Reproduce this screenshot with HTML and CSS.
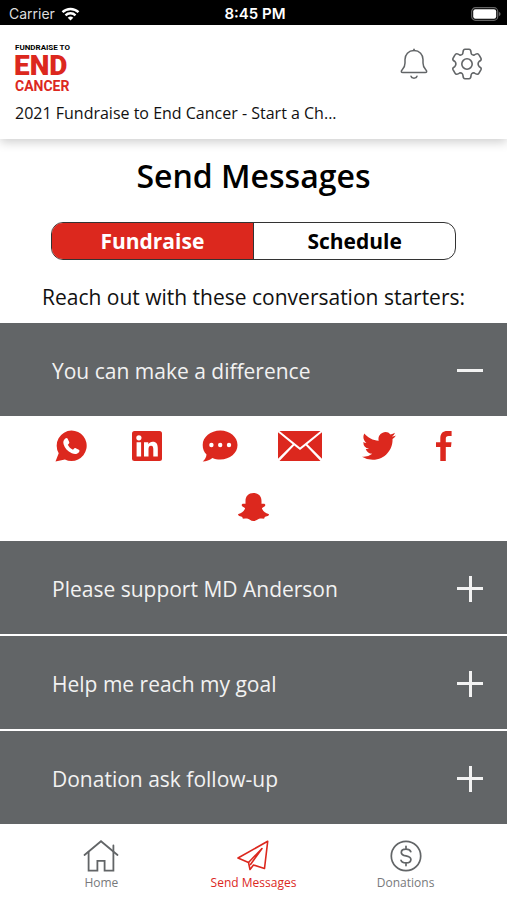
FILE: index.html
```html
<!DOCTYPE html>
<html lang="en">
	<head>
		<meta charset="utf-8" />
		<meta name="viewport" content="width=device-width, initial-scale=1" />
		<title>Send Messages</title>
		<link rel="stylesheet" href="styles.css">
	</head>
	<body>
		<div class="status">
			<div class="status-left">
				<span class="carrier">Carrier</span>
				<svg class="wifi" viewBox="0 0 18 14" fill="none" stroke="#fff" stroke-width="2.4">
					<path d="M1 5.2a11.5 11.5 0 0 1 16 0" />
					<path d="M4 8.3a7.2 7.2 0 0 1 10 0" />
					<path d="M9 13.6L6.2 10.8a4 4 0 0 1 5.6 0z" fill="#fff" stroke="none" />
				</svg>
			</div>
			<span class="time">8:45 PM</span>
			<div class="status-right">
				<svg class="battery" viewBox="0 0 30 14">
					<rect x="0.7" y="0.7" width="26" height="12.6" rx="3.8" fill="none" stroke="#666" stroke-width="1.2" />
					<rect x="2.2" y="2.2" width="23" height="9.6" rx="2.2" fill="#fff" />
					<path d="M27.9 4.8q1.7.7 1.7 2.2t-1.7 2.2z" fill="#666" />
				</svg>
			</div>
		</div>

		<header class="header">
			<div class="header-top">
				<svg class="logo" viewBox="0 0 53 52" role="img" aria-label="Fundraise to End Cancer">
					<text class="logo-small" x="0" y="7">FUNDRAISE TO</text>
					<text class="logo-big" x="-1" y="32">END</text>
					<text class="logo-mid" x="0" y="48">CANCER</text>
				</svg>
				<div class="actions">
					<button type="button" aria-label="Notifications">
						<svg class="bell" viewBox="0 0 28 32" fill="none" stroke="#626567" stroke-width="1.5" stroke-linecap="round" stroke-linejoin="round">
							<path d="M14 1.200V2.600" />
							<path d="M14 2.600C8.400 2.600 5 6.600 5 11.600V15c0 3.200-1 4.800-2.600 6.600C.6 23.600 1.200 24.600 2.800 24.600H25.200C26.800 24.600 27.400 23.600 25.600 21.600 24 19.800 23 18.200 23 15V11.600C23 6.600 19.600 2.600 14 2.600z" />
							<path d="M11 28.200C11.600 30.800 16.400 30.800 17 28.200" />
						</svg>
					</button>
					<button type="button" aria-label="Settings">
						<svg class="gear" viewBox="0 0 32 32" fill="none" stroke="#626567" stroke-width="1.6" stroke-linejoin="round">
							<circle cx="16" cy="16" r="5.2" />
							<path d="M12 4.200Q12.200 1.200 14 1.200H18Q19.800 1.200 20 4.200 20.200 7.400 23.100 7.100 26.800 4.500 28 6.800L30 10.400Q30.800 12.200 28.300 13.300 25.900 16 28.300 18.700 30.800 19.800 30 21.600L28 25.200Q26.800 27.500 23.100 24.900 20.200 24.600 20 27.800 19.800 30.800 18 30.800H14Q12.200 30.800 12 27.800 11.800 24.600 8.900 24.900 5.200 27.500 4 25.200L2 21.600Q1.200 19.800 3.700 18.700 6.100 16 3.700 13.300 1.200 12.200 2 10.400L4 6.800Q5.200 4.500 8.900 7.100 11.800 7.400 12 4.200z" />
						</svg>
					</button>
				</div>
			</div>
			<p class="event">2021 Fundraise to End Cancer - Start a Ch...</p>
		</header>

		<main class="main">
			<h1>Send Messages</h1>
			<div class="tabs">
				<button type="button" class="tab active">Fundraise</button>
				<button type="button" class="tab">Schedule</button>
			</div>
			<p class="intro">Reach out with these conversation starters:</p>

			<button type="button" class="row open" aria-expanded="true">
				<span>You can make a difference</span>
				<i class="sign minus"></i>
			</button>
			<div class="share">
				<a href="#" aria-label="WhatsApp">
					<svg width="32" height="32" viewBox="0 0 32 32">
						<path fill="#dc281e" d="M16.500.5a15.200 15.200 0 1 1-6.600 28.900L.5 31.500l3.200-8.200A15.200 15.200 0 0 1 16.500.5z" />
						<path fill="#fff" d="M10.300 8.600c1-.9 2-.7 2.500.3l1.400 3c.4.9-.1 1.600-1.400 2.800 1.200 2.300 2.700 3.800 5.200 5 1.200-1.400 1.900-2 2.800-1.500l3 1.500c.9.500.9 1.500.1 2.500-1.500 1.900-4 2.300-7.100 1C12.500 21.400 9.700 18 8.600 14.300c-.7-2.500-.1-4.300 1.700-5.700z" />
					</svg>
				</a>
				<a href="#" aria-label="LinkedIn">
					<svg width="35" height="30" viewBox="-5 0 35 30">
						<rect width="30" height="30" rx="2.5" fill="#dc281e" />
						<g fill="#fff">
							<circle cx="6.900" cy="6.800" r="2.600" />
							<path d="M4.600 11.200h4.500v14.200H4.600zM12 11.200h4.300v2c.9-1.500 2.400-2.400 4.300-2.400 4 0 5.200 2.600 5.200 6.700v7.900h-4.500v-7c0-2-.3-3.700-2.300-3.700s-2.500 1.600-2.500 3.600v7.100H12z" />
						</g>
					</svg>
				</a>
				<a href="#" aria-label="Text message">
					<svg width="36" height="32" viewBox="0 0 36 32">
						<path fill="#dc281e" d="M18.300.5C28 .5 35.500 7 35.500 15S28 29.500 18.300 29.500c-2.900 0-5.500-.5-7.900-1.600-2.800 2.200-6 3.500-9.700 3.600 2.300-2 3.600-4.300 3.800-7C1.900 22 .7 18.800.7 15 .7 7 8.500.5 18.300.5z" />
						<g fill="#fff">
							<circle cx="9.400" cy="15" r="2.200" />
							<circle cx="18.200" cy="15" r="2.200" />
							<circle cx="27" cy="15" r="2.200" />
						</g>
					</svg>
				</a>
				<a href="#" aria-label="Email">
					<svg width="44" height="30" viewBox="0 0 44 30">
						<path fill="#dc281e" d="M1.500 0h41L22 16.400zM0 1.300L14.600 13.200 0 27.800zM44 1.300v26.500L29.400 13.200zM16.200 14.500L22 19l5.800-4.500L42.500 30h-41z" />
					</svg>
				</a>
				<a href="#" aria-label="Twitter">
					<svg width="34" height="30" viewBox="0 2 24 20">
						<path fill="#dc281e" d="M23.950 4.570a10 10 0 0 1-2.820.770 4.960 4.960 0 0 0 2.160-2.720c-.950.550-2 .950-3.130 1.180a4.920 4.920 0 0 0-8.380 4.480C7.690 8.090 4.070 6.130 1.640 3.160a4.820 4.820 0 0 0-.670 2.480c0 1.710.870 3.210 2.190 4.100a4.900 4.900 0 0 1-2.230-.620v.060a4.920 4.920 0 0 0 3.950 4.830 5 5 0 0 1-2.210.080 4.940 4.940 0 0 0 4.600 3.420A9.870 9.870 0 0 1 0 19.540a13.990 13.990 0 0 0 7.560 2.210c9.050 0 14-7.500 14-13.980 0-.210 0-.420-.020-.630a9.940 9.940 0 0 0 2.410-2.570z" />
					</svg>
				</a>
				<a href="#" aria-label="Facebook">
					<svg width="16" height="30" viewBox="0 0 16 30">
						<path fill="#dc281e" d="M4.300 30V16H0v-4.800h4.300V7.400C4.300 2.500 6.700 0 11.500 0H15.600v4.900h-2.900c-2.200 0-2.900.9-2.900 2.700v3.600h5.700L15 16H9.800v14z" />
					</svg>
				</a>
				<a href="#" aria-label="Snapchat">
					<svg width="31" height="28" viewBox="0 0 31 28">
						<path fill="#dc281e" d="M15.500 0c4.900 0 8 3.200 8 8v2.700c1.300.1 2.800-.3 3.600.7.800 1.100-.6 2.500-2.600 3.300-.7.300-.6.900-.2 1.600 1.300 2.500 3.400 4 6.200 4.700.9.300.5 1.500-.8 2.100-1.100.5-2.500.7-2.900 1-.4.400-.2 1.300-.7 1.500-.9.300-2.600-.3-4.200-.1-2.100.3-3.400 2.500-6.400 2.500s-4.300-2.200-6.400-2.500c-1.600-.2-3.300.4-4.200.1-.5-.2-.3-1.100-.7-1.500-.4-.3-1.800-.5-2.900-1-1.300-.6-1.700-1.800-.8-2.100 2.800-.7 4.900-2.200 6.200-4.700.4-.7.5-1.300-.2-1.600-2-.8-3.400-2.200-2.600-3.300.8-1 2.300-.6 3.600-.7V8c0-4.800 3.100-8 8-8z" />
					</svg>
				</a>
			</div>

			<div class="rows">
				<button type="button" class="row" aria-expanded="false">
					<span>Please support MD Anderson</span>
					<i class="sign"></i>
				</button>
				<button type="button" class="row" aria-expanded="false">
					<span>Help me reach my goal</span>
					<i class="sign"></i>
				</button>
				<button type="button" class="row" aria-expanded="false">
					<span>Donation ask follow-up</span>
					<i class="sign"></i>
				</button>
			</div>
		</main>

		<nav class="nav">
			<a href="#">
				<svg width="36" height="32" viewBox="0 0 36 32" fill="none" stroke="#626567" stroke-width="1.8" stroke-linecap="round">
					<path d="M1.500 15L18 1.200 34.500 15" />
					<path d="M5.600 12v18.600h8.800V20.800h7.200v9.800h8.800V12M30.400 11V5.400" />
				</svg>
				<span>Home</span>
			</a>
			<a href="#" class="current" aria-current="page">
				<svg width="34" height="32" viewBox="0 0 34 32" fill="none" stroke="#dc281e" stroke-width="1.6" stroke-linejoin="round" stroke-linecap="round">
					<path d="M31.700 1.300L2 18l10.500 4.500L14 29.500l3.500-4.500 11 3.500z" />
					<path d="M12.500 22.500L26 8.500 14.500 24.500" />
				</svg>
				<span>Send Messages</span>
			</a>
			<a href="#">
				<svg width="32" height="32" viewBox="0 0 32 32" fill="none" stroke="#626567" stroke-width="1.7" stroke-linecap="round">
					<circle cx="16" cy="16" r="14.700" />
					<path d="M16 6.300v2.800M16 22.800v2.800M20.800 11.600c-.7-1.700-2.300-2.500-4.800-2.500-3 0-4.700 1.200-4.700 3.300 0 2.300 1.900 2.900 4.700 3.500 3 .6 4.900 1.300 4.900 3.600 0 2.200-1.800 3.400-4.900 3.400-2.700 0-4.400-.9-5-2.600" />
				</svg>
				<span>Donations</span>
			</a>
		</nav>
	</body>
</html>
```
FILE: styles.css
```css
*{
	box-sizing: border-box;
}
body{
	margin: 0;
	min-height: 100vh;
	display: flex;
	flex-direction: column;
	font-family: "Open Sans", "Noto Sans", sans-serif;
	color: #111;
	background: #fff;
}
h1, p{
	margin: 0;
}
button{
	font: inherit;
	color: inherit;
	background: none;
	border: 0;
	padding: 0;
	cursor: pointer;
}
svg{
	display: block;
}
a{
	color: inherit;
	text-decoration: none;
}

/* status bar */
.status{
	display: grid;
	grid-template-columns: 1fr auto 1fr;
	align-items: center;
	height: 25px;
	padding: 2px 6px 0 9px;
	background: #000;
	color: #fff;
	font: 14px/20px Inter, sans-serif;
}
.status-left{
	display: flex;
	align-items: center;
	gap: 6px;
}
.carrier{
	color: #ddd;
}
.wifi{
	width: 19px;
	height: 14px;
}
.time{
	font-size: 15px;
	font-weight: 600;
}
.battery{
	width: 30px;
	height: 14px;
	margin-left: auto;
}

/* header */
.header{
	height: 114px;
	padding: 18px 24px 0 15px;
	box-shadow: 0 3px 10px rgba(0,0,0,0.2);
}
.header-top{
	display: flex;
	justify-content: space-between;
	align-items: flex-start;
}
.logo{
	width: 53px;
	height: 52px;
	font-family: Roboto, "Liberation Sans", sans-serif;
	font-weight: 900;
	overflow: visible;
}
.logo-small{
	font-size: 8px;
	font-weight: bold;
}
.logo-big{
	font-size: 28px;
	fill: #dc281e;
}
.logo-mid{
	font-size: 14px;
	font-weight: bold;
	fill: #dc281e;
}
.actions{
	display: flex;
	gap: 23px;
	padding-top: 5px;
}
.bell{
	width: 28px;
	height: 32px;
}
.gear{
	width: 32px;
	height: 32px;
}
.event{
	padding-top: 6px;
	font-size: 16px;
	line-height: 24px;
}

/* content */
.main{
	flex: 1;
	padding-top: 15px;
}
h1{
	font-size: 32px;
	line-height: 44px;
	font-weight: 600;
	text-align: center;
	color: #000;
}
.tabs{
	display: flex;
	width: 80%;
	height: 38px;
	margin: 24px auto 0;
	border: 1px solid #333;
	border-radius: 12px;
	overflow: hidden;
}
.tab{
	flex: 1;
	font-size: 21px;
	line-height: 34px;
	font-weight: bold;
	color: #000;
}
.tab.active{
	color: #fff;
	background: #dc281e;
	border-right: 1px solid #333;
}
.intro{
	padding: 22px 0 10px;
	font-size: 21px;
	line-height: 31px;
	text-align: center;
}
.row{
	display: flex;
	justify-content: space-between;
	align-items: center;
	width: 100%;
	height: 93px;
	padding: 2px 24px 0 52px;
	background: #626567;
	color: #f2f2f2;
	font-size: 21px;
	text-align: left;
}
.rows{
	display: flex;
	flex-direction: column;
	gap: 2px;
}
.sign{
	width: 26px;
	height: 26px;
	background:
		linear-gradient(#f2f2f2,#f2f2f2) center/100% 3px no-repeat,
		linear-gradient(#f2f2f2,#f2f2f2) center/3px 100% no-repeat;
}
.sign.minus{
	background: linear-gradient(#f2f2f2,#f2f2f2) center/100% 3px no-repeat;
}
.share{
	display: flex;
	flex-wrap: wrap;
	justify-content: center;
	gap: 29px 40px;
	padding: 14px 32px 18px;
}
.share a{
	display: flex;
	align-items: center;
	height: 32px;
}

/* bottom nav */
.nav{
	display: grid;
	grid-template-columns: repeat(3, 1fr);
	height: 77px;
	padding: 16px 5% 0;
	font-size: 12px;
	line-height: 16px;
	color: #77797b;
}
.nav a{
	display: flex;
	flex-direction: column;
	align-items: center;
	gap: 3px;
}
.nav .current{
	color: #dc281e;
}
```
